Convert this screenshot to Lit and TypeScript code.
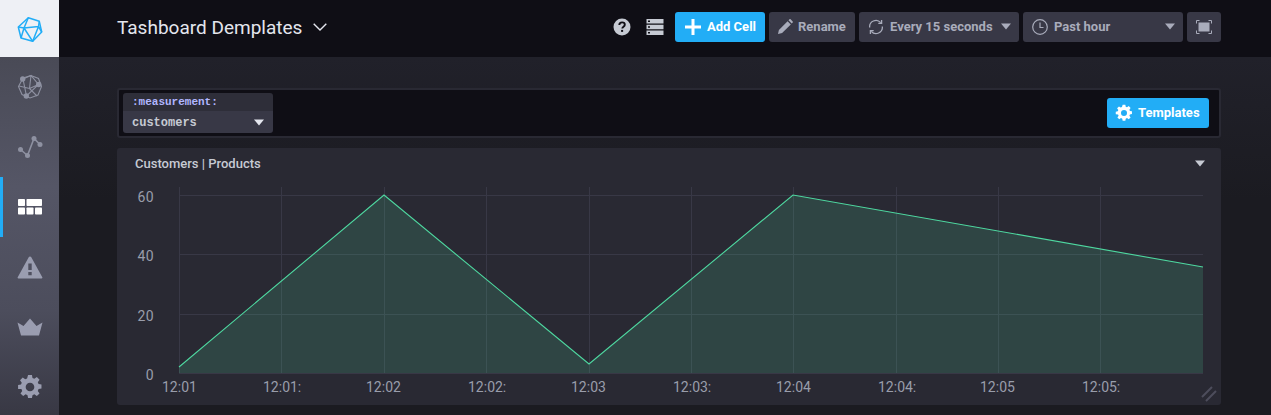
import { LitElement, html, css, svg } from "lit";
import { customElement } from "lit/decorators.js";

const gearPath =
  "M10.2 1h3.6l.5 2.7 1.7.7 2.3-1.6 2.5 2.5-1.6 2.3.7 1.7 2.7.5v3.6l-2.7.5-.7 1.7 1.6 2.3-2.5 2.5-2.3-1.6-1.7.7-.5 2.7h-3.6l-.5-2.7-1.7-.7-2.3 1.6-2.5-2.5 1.6-2.3-.7-1.7L1 13.8v-3.6l2.7-.5.7-1.7-1.6-2.3 2.5-2.5 2.3 1.6 1.7-.7zM12 8a4 4 0 1 0 0 8 4 4 0 0 0 0-8z";

const gear = (size: number) => html`<svg width=${size} height=${size} viewBox="0 0 24 24">
  <path d=${gearPath} fill="currentColor" fill-rule="evenodd"></path>
</svg>`;

const caret = html`<svg class="caret" width="12" height="7" viewBox="0 0 12 7"><path d="M1 .5h10L6 6.5z" fill="currentColor"></path></svg>`;

const logo = html`<svg width="26" height="26" viewBox="0 0 26 26" fill="none" stroke="#22adf6" stroke-width="1.5" stroke-linejoin="round">
  <path d="M11.300 1.700l11 3.600 2.400 10.700-9 9.300L4 22 1.300 11z"></path>
  <path d="M11.300 1.700L7 12l14.500-1.500.8-5.200M21.500 10.500l-5.800 14.800L7 12 1.300 11M4 22l3-10M21.500 10.500l3.200 5.500"></path>
</svg>`;

const hostsIcon = html`<svg width="26" height="26" viewBox="0 0 26 26" fill="none" stroke="currentColor" stroke-width="1.100">
  <path d="M6 4l8-2.500 7.500 3 3 8-3.500 8.500-8 3-8-3.500-3.500-8z"></path>
  <path d="M6 5l8-3.500 7.500 9L9.500 22 6 5zM14 1.500l-1.500 13M21.500 10.500l-9 4M12.500 14.500L2 12M12.500 14.500L20 22"></path>
  <circle cx="5.700" cy="5" r="2.700" fill="currentColor" stroke="none"></circle>
  <circle cx="21.700" cy="10.500" r="2.700" fill="currentColor" stroke="none"></circle>
  <circle cx="9.300" cy="22" r="2.700" fill="currentColor" stroke="none"></circle>
</svg>`;

const graphIcon = html`<svg width="26" height="26" viewBox="0 0 26 26" fill="none" stroke="currentColor" stroke-width="1.600">
  <path d="M3.500 15.500L10.500 21.500L17 4.500L23 10.500"></path>
  <circle cx="3.500" cy="15.500" r="2.500" fill="currentColor" stroke="none"></circle>
  <circle cx="10.500" cy="21.500" r="2.500" fill="currentColor" stroke="none"></circle>
  <circle cx="17" cy="4.500" r="2.500" fill="currentColor" stroke="none"></circle>
  <circle cx="23" cy="10.500" r="2.500" fill="currentColor" stroke="none"></circle>
</svg>`;

const dashIcon = html`<svg width="24" height="16" viewBox="0 0 24 16" fill="currentColor">
  <rect x="0" y="0" width="7" height="7" rx=".8"></rect>
  <rect x="8.500" y="0" width="15.500" height="7" rx=".8"></rect>
  <rect x="0" y="8.500" width="7" height="7" rx=".8"></rect>
  <rect x="8.500" y="8.500" width="7" height="7" rx=".8"></rect>
  <rect x="17" y="8.500" width="7" height="7" rx=".8"></rect>
</svg>`;

const alertIcon = html`<svg width="26" height="24" viewBox="0 0 26 24">
  <path fill-rule="evenodd" fill="currentColor" d="M13 1.500c.6 0 1 .3 1.300.8l11 20c.3.600 0 1.200-.7 1.200H1.400c-.7 0-1-.6-.7-1.200l11-20c.3-.5.700-.8 1.300-.8zM11.300 8.500v6.500h3.400V8.500zM11.300 17v3.200h3.400V17z"></path>
</svg>`;

const crownIcon = html`<svg width="26" height="18" viewBox="0 0 26 18">
  <path fill="currentColor" d="M.5 4.500l6 3.500L13 .5 19.500 8l6-3.500L22 17.500H4z"></path>
</svg>`;

const helpIcon = html`<svg width="18" height="18" viewBox="0 0 18 18">
  <circle cx="9" cy="9" r="8.500" fill="currentColor"></circle>
  <path d="M6.300 7c0-1.700 1.200-2.600 2.800-2.600 1.600 0 2.700.9 2.700 2.300 0 1.900-2.500 2-2.500 3.700" fill="none" stroke="#0f0e15" stroke-width="1.900"></path>
  <rect x="8.100" y="11.900" width="2" height="2" fill="#0f0e15"></rect>
</svg>`;

const serverIcon = html`<svg width="18" height="16" viewBox="0 0 18 16" fill="currentColor">
  <path fill-rule="evenodd" d="M.5 0h17v4.500H.5zM2 1.500v1.500h2V1.500zM.5 5.700h17v4.500H.5zM2 7.200v1.500h2V7.200zM.5 11.400h17v4.500H.5zM2 12.900v1.500h2v-1.500z"></path>
</svg>`;

const plusIcon = html`<svg width="16" height="16" viewBox="0 0 16 16"><path d="M8 0v16M0 8h16" stroke="currentColor" stroke-width="3"></path></svg>`;

const pencilIcon = html`<svg width="15" height="15" viewBox="0 0 15 15"><path fill="currentColor" d="M0 15l.9-4.100L9.600 2.200l3.200 3.200-8.700 8.700zM10.500 1.300l1-1c.3-.3.800-.3 1.100 0l2.100 2.100c.3.300.3.800 0 1.100l-1 1z"></path></svg>`;

const refreshIcon = html`<svg width="16" height="16" viewBox="0 0 16 16" fill="none" stroke="currentColor" stroke-width="1.300">
  <path d="M1.700 8.500A6.300 6.300 0 0 1 12.700 3.600M14.300 7.500A6.300 6.300 0 0 1 3.300 12.400"></path>
  <path d="M13.600 1v3.300h-3.300M2.400 15v-3.300h3.300"></path>
</svg>`;

const clockIcon = html`<svg width="16" height="16" viewBox="0 0 16 16" fill="none" stroke="currentColor" stroke-width="1.200">
  <circle cx="8" cy="8" r="7.300"></circle>
  <path d="M8 3.500V8.500H11.500"></path>
</svg>`;

const fullscreenIcon = html`<svg width="16" height="14" viewBox="0 0 16 14">
  <rect x="2.500" y="2.500" width="11" height="9" fill="currentColor"></rect>
  <path d="M.5 3.500V.5h3M12.500.5h3v3M15.500 10.500v3h-3M3.500 13.500h-3v-3" fill="none" stroke="currentColor"></path>
</svg>`;

const chevron = html`<svg width="14" height="8" viewBox="0 0 14 8"><path d="M.7.700L7 7l6.300-6.300" fill="none" stroke="currentColor" stroke-width="1.400"></path></svg>`;

const resizeHandle = html`<svg class="resize" width="16" height="16" viewBox="0 0 16 16">
  <path d="M1 11L11 1M5 15L15 5" stroke="#4d4d5c" stroke-width="2" fill="none"></path>
</svg>`;

// chart geometry, in the svg's own pixels
const plot = { left: 62, right: 1086, top: 39, bottom: 225 };
const gridX = [62, 164, 267, 369, 472, 574, 676, 779, 881, 983];
const gridY = [
  { y: 47, label: "60" },
  { y: 106, label: "40" },
  { y: 166, label: "20" },
  { y: 225, label: "0" },
];
const xLabels = ["12:01", "12:01:", "12:02", "12:02:", "12:03", "12:03:", "12:04", "12:04:", "12:05", "12:05:"];
const xLabelShift = [17, 18, 18, 18, 18, 18, 17, 18, 18, 18];
const series: [number, number][] = [
  [62, 219],
  [267, 47],
  [472, 216],
  [676, 47],
  [1086, 119],
];

@customElement("app-root")
export class AppRoot extends LitElement {
  static override styles = css`
    :host {
      display: flex;
      height: 100vh;
      min-height: 415px;
      overflow: hidden;
      font-family: Roboto, "Liberation Sans", sans-serif;
      background: #1d1d24;
    }

    .sidebar {
      width: 59px;
      flex: none;
      display: flex;
      flex-direction: column;
      color: #8e91a1;
      background: linear-gradient(180deg, #44454f 0%, #555666 45%, #4c4d5c 75%, #383844 100%);
    }

    .nav-logo {
      height: 57px;
      flex: none;
      display: flex;
      align-items: center;
      justify-content: center;
      background: #eef0f5;
    }

    .nav-item {
      height: 60px;
      flex: none;
      display: flex;
      align-items: center;
      justify-content: center;
      border-left: 3px solid transparent;
      border-right: 3px solid transparent;
    }

    .nav-item.active {
      color: #fff;
      border-left-color: #22adf6;
    }

    .nav-item.light {
      color: #9a9db0;
    }

    .main {
      flex: 1;
      min-width: 0;
      display: flex;
      flex-direction: column;
    }

    .header {
      height: 57px;
      flex: none;
      box-sizing: border-box;
      padding: 0 50px 3px 58px;
      display: flex;
      align-items: center;
      gap: 4px;
      background: #0f0e15;
    }

    .title {
      display: flex;
      align-items: center;
      gap: 11px;
      font-size: 19px;
      color: #e4e6ee;
      margin-right: auto;
      white-space: nowrap;
    }

    .icon-btn {
      display: flex;
      color: #c6cad3;
    }

    .icon-btn.help {
      margin-right: 11px;
    }

    .icon-btn.server {
      margin-right: 7px;
    }

    .btn {
      height: 30px;
      flex: none;
      box-sizing: border-box;
      display: flex;
      align-items: center;
      gap: 6px;
      padding: 0 7px 1px 9px;
      border-radius: 3px;
      font-size: 13px;
      font-weight: 700;
      white-space: nowrap;
      color: #a9acbb;
      background: #383846;
    }

    .btn.primary {
      color: #fff;
      background: #22adf6;
    }

    .btn.add {
      width: 90px;
      padding-left: 10px;
    }

    .btn.rename {
      width: 86px;
      gap: 5px;
    }

    .btn.every {
      width: 160px;
    }

    .btn.past {
      width: 160px;
    }

    .btn.full {
      width: 34px;
      padding: 0 9px;
      justify-content: center;
    }

    .btn .caret {
      margin-left: auto;
    }

    .content {
      flex: 1;
      min-height: 0;
      padding: 31px 50px 10px 58px;
      display: flex;
      flex-direction: column;
      gap: 10px;
      background: linear-gradient(180deg, #21212a 0%, #1b1b21 40%);
    }

    .template-bar {
      height: 50px;
      flex: none;
      box-sizing: border-box;
      padding: 3px 10px 3px 4px;
      display: flex;
      align-items: center;
      justify-content: space-between;
      border: 2px solid #292933;
      border-radius: 3px;
      background: #0f0e15;
    }

    .variable {
      width: 150px;
      border-radius: 3px;
      overflow: hidden;
      font-family: "Liberation Mono", "DejaVu Sans Mono", monospace;
      font-weight: 700;
    }

    .variable-name {
      height: 18px;
      padding-left: 9px;
      display: flex;
      align-items: center;
      font-size: 11px;
      color: #b1b6ff;
      background: #2e2e39;
    }

    .variable-value {
      height: 22px;
      box-sizing: border-box;
      padding: 1px 8px 0 9px;
      display: flex;
      align-items: center;
      justify-content: space-between;
      font-size: 12px;
      color: #c6cad3;
      background: #383846;
    }

    .variable-value .caret {
      color: #e4e6ee;
    }

    .btn.templates {
      width: 102px;
      padding: 0 0 1px 8px;
      gap: 5px;
    }

    .panel {
      position: relative;
      flex: 1;
      min-height: 0;
      border-radius: 3px;
      background: #292933;
    }

    .panel-head {
      height: 31px;
      padding: 0 15px 0 18px;
      display: flex;
      align-items: center;
      justify-content: space-between;
      font-size: 13px;
      font-weight: 500;
      color: #c6cad3;
    }

    .panel-head .caret {
      color: #c6cad3;
    }

    .chart {
      display: block;
      position: absolute;
      left: 0;
      top: 0;
    }

    .chart text {
      font-family: Roboto, "Liberation Sans", sans-serif;
      fill: #999dab;
    }

    .resize {
      position: absolute;
      right: 4px;
      bottom: 3px;
    }
  `;

  private renderChart() {
    const line = series.map(([x, y]) => `${x},${y}`).join(" ");
    const area = `${plot.left},${plot.bottom} ${line} ${plot.right},${plot.bottom}`;
    return html`<svg class="chart" width="1104" height="257" viewBox="0 0 1104 257">
      ${gridX.map(
        (x) => svg`<line x1=${x + 0.5} x2=${x + 0.5} y1=${plot.top} y2=${plot.bottom} stroke="#383846"></line>`
      )}
      ${gridY.map(
        (g) => svg`<line x1=${plot.left} x2=${plot.right} y1=${g.y + 0.5} y2=${g.y + 0.5} stroke="#383846"></line>
          <text x="37" y=${g.y + 7} text-anchor="end" font-size="14" letter-spacing=".4">${g.label}</text>`
      )}
      <polygon points=${area} fill="#4ed8a0" fill-opacity="0.16"></polygon>
      <polyline points=${line} fill="none" stroke="#4ed8a0" stroke-width="1.100"></polyline>
      ${xLabels.map(
        (label, i) => svg`<text x=${gridX[i] - xLabelShift[i]} y="244" font-size="14">${label}</text>`
      )}
    </svg>`;
  }

  override render() {
    return html`
      <nav class="sidebar">
        <div class="nav-logo">${logo}</div>
        <div class="nav-item">${hostsIcon}</div>
        <div class="nav-item">${graphIcon}</div>
        <div class="nav-item active">${dashIcon}</div>
        <div class="nav-item light">${alertIcon}</div>
        <div class="nav-item light">${crownIcon}</div>
        <div class="nav-item light">${gear(26)}</div>
      </nav>
      <div class="main">
        <header class="header">
          <div class="title">Tashboard Demplates ${chevron}</div>
          <span class="icon-btn help">${helpIcon}</span>
          <span class="icon-btn server">${serverIcon}</span>
          <div class="btn primary add">${plusIcon}<span>Add Cell</span></div>
          <div class="btn rename">${pencilIcon}<span>Rename</span></div>
          <div class="btn every">${refreshIcon}<span>Every 15 seconds</span>${caret}</div>
          <div class="btn past">${clockIcon}<span>Past hour</span>${caret}</div>
          <div class="btn full">${fullscreenIcon}</div>
        </header>
        <main class="content">
          <section class="template-bar">
            <div class="variable">
              <div class="variable-name">:measurement:</div>
              <div class="variable-value"><span>customers</span>${caret}</div>
            </div>
            <div class="btn primary templates">${gear(18)}<span>Templates</span></div>
          </section>
          <section class="panel">
            ${this.renderChart()}
            <div class="panel-head"><span>Customers | Products</span>${caret}</div>
            ${resizeHandle}
          </section>
        </main>
      </div>
    `;
  }
}
